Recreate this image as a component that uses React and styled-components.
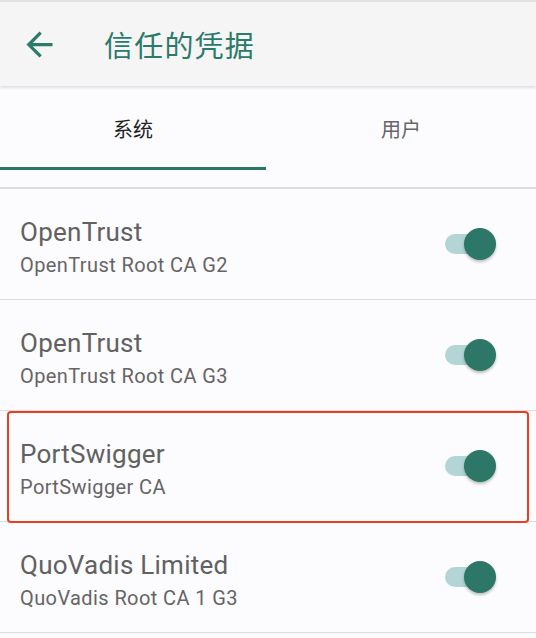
import React, { useState } from 'react';
import styled, { createGlobalStyle } from 'styled-components';

const GlobalStyle = createGlobalStyle`
  html, body {
    margin: 0;
    padding: 0;
    background: #fcfbfd;
  }
  body {
    font-family: Roboto, "Noto Sans CJK SC", sans-serif;
  }
`;

const Screen = styled.div`
  width: 536px;
  height: 638px;
  overflow: hidden;
  background: #fcfbfd;
  border-top: 2px solid #e3e0e2;
  box-sizing: border-box;
`;

const AppBar = styled.header`
  position: relative;
  z-index: 1;
  height: 84px;
  display: flex;
  align-items: center;
  background: #f5f5f5;
  box-shadow: 0 2px 3px rgba(0, 0, 0, 0.12);
`;

const BackButton = styled.button`
  width: 39px;
  height: 39px;
  margin-left: 19.5px;
  padding: 0;
  border: 0;
  background: none;
  display: flex;
  align-items: center;
  justify-content: center;
  color: #2b7a6a;
`;

const Title = styled.h1`
  margin: 0 0 0 45.5px;
  font-family: "Noto Sans CJK SC", sans-serif;
  font-size: 29px;
  font-weight: 400;
  color: #2b7a6a;
  letter-spacing: 1.2px;
`;

const TabBar = styled.nav`
  display: flex;
  height: 84px;
`;

const Tab = styled.div`
  position: relative;
  flex: 0 0 ${(p) => p.$width}px;
  display: flex;
  align-items: center;
  justify-content: center;
  font-family: "Noto Sans CJK SC", sans-serif;
  font-size: 20px;
  color: ${(p) => (p.$active ? '#222222' : '#666666')};
  cursor: pointer;

  &::after {
    content: '';
    display: ${(p) => (p.$active ? 'block' : 'none')};
    position: absolute;
    left: 0;
    right: 0;
    bottom: 0;
    height: 3px;
    background: #2b7766;
  }
`;

const TabDivider = styled.div`
  margin-top: 17px;
  height: 2px;
  background: #dedbde;
`;

const List = styled.ul`
  list-style: none;
  margin: 0;
  padding: 0;
`;

const Row = styled.li`
  position: relative;
  height: 110px;
  display: flex;
  align-items: center;
  justify-content: space-between;
  padding: 0 40px 0 20px;
  border-bottom: 1px solid #dedcdf;

  ${(p) =>
    p.$marked &&
    `
    &::before {
      content: '';
      position: absolute;
      left: 7px;
      right: 7px;
      top: 0;
      bottom: -2px;
      border: 2px solid #e8401f;
      border-radius: 4px;
    }
  `}
`;

const Texts = styled.div`
  padding-top: 6px;
  display: flex;
  flex-direction: column;
`;

const Name = styled.span`
  font-size: 26px;
  line-height: 32px;
  letter-spacing: 0.25px;
  color: #616161;
`;

const Sub = styled.span`
  margin-top: 3px;
  font-size: 20px;
  line-height: 28px;
  letter-spacing: 0.4px;
  color: #656565;
`;

const Switch = styled.div`
  position: relative;
  width: 51px;
  height: 32px;
`;

const Track = styled.div`
  position: absolute;
  left: 0;
  top: 6px;
  width: 46px;
  height: 20px;
  border-radius: 10px;
  background: ${(p) => (p.$on ? '#b3d5d6' : '#c9c9c9')};
`;

const Thumb = styled.div`
  position: absolute;
  top: 0;
  left: ${(p) => (p.$on ? '19px' : '0')};
  width: 32px;
  height: 32px;
  border-radius: 50%;
  background: ${(p) => (p.$on ? '#2c7767' : '#f1f1f1')};
  box-shadow: 0 2px 3px rgba(0, 0, 0, 0.25);
`;

const certs = [
  { name: 'OpenTrust', sub: 'OpenTrust Root CA G2' },
  { name: 'OpenTrust', sub: 'OpenTrust Root CA G3' },
  { name: 'PortSwigger', sub: 'PortSwigger CA', marked: true },
  { name: 'QuoVadis Limited', sub: 'QuoVadis Root CA 1 G3' },
];

function Toggle({ on }) {
  return (
    <Switch>
      <Track $on={on} />
      <Thumb $on={on} />
    </Switch>
  );
}

export default function App() {
  const [tab, setTab] = useState(0);
  return (
    <>
      <GlobalStyle />
      <Screen>
        <AppBar>
          <BackButton aria-label="back">
            <svg width="39" height="39" viewBox="0 0 24 24">
              <path
                fill="currentColor"
                d="M20 11H7.83l5.59-5.59L12 4l-8 8 8 8 1.41-1.41L7.83 13H20v-2z"
              />
            </svg>
          </BackButton>
          <Title>信任的凭据</Title>
        </AppBar>
        <TabBar>
          <Tab $width={266} $active={tab === 0} onClick={() => setTab(0)}>
            系统
          </Tab>
          <Tab $width={270} $active={tab === 1} onClick={() => setTab(1)}>
            用户
          </Tab>
        </TabBar>
        <TabDivider />
        <List>
          {certs.map((c, i) => (
            <Row key={i} $marked={c.marked}>
              <Texts>
                <Name>{c.name}</Name>
                <Sub>{c.sub}</Sub>
              </Texts>
              <Toggle on />
            </Row>
          ))}
        </List>
      </Screen>
    </>
  );
}
